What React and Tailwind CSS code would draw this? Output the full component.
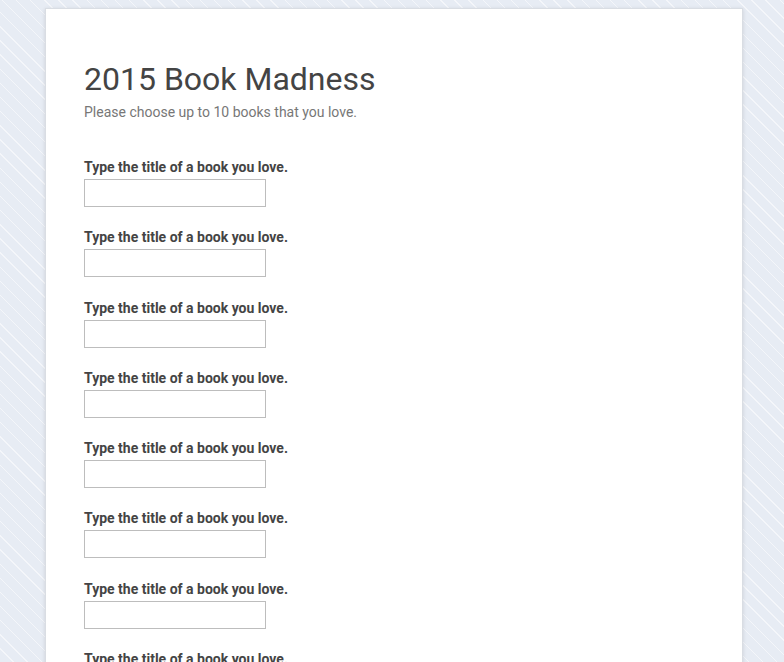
const QUESTIONS = Array.from({ length: 8 }, (_, i) => i)

export default function App() {
  return (
    <div className="h-screen overflow-hidden bg-[#e7ecf4] bg-[repeating-linear-gradient(45deg,transparent_0px,transparent_9px,rgba(255,255,255,0.55)_9px,rgba(255,255,255,0.55)_10px)] font-['Roboto',sans-serif]">
      <div className="ml-[45px] mt-[8px] h-[700px] w-[698px] border border-[#d9dde3] bg-white pl-[38px] pt-[51px] shadow-[0_1px_4px_rgba(0,0,0,0.12)]">
        <h1 className="text-[32px] leading-[38px] text-[#444]">2015 Book Madness</h1>
        <p className="mt-[4px] text-[14px] leading-[20px] text-[#777]">
          Please choose up to 10 books that you love.
        </p>
        <div className="mt-[36px] flex flex-col gap-[21.3px]">
          {QUESTIONS.map((q) => (
            <div key={q}>
              <label className="block text-[14px] font-bold leading-[18px] text-[#444]">
                Type the title of a book you love.
              </label>
              <input
                type="text"
                className="mt-[3px] block h-[28px] w-[182px] border border-[#bdbdbd] bg-white px-1 outline-none"
              />
            </div>
          ))}
        </div>
      </div>
    </div>
  )
}
